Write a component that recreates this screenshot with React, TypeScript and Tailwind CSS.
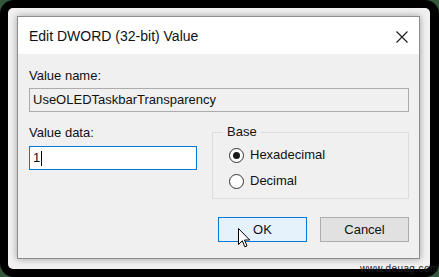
import React from 'react'

const font = { fontFamily: '"Liberation Sans", Arial, sans-serif' }

function CloseIcon() {
  return (
    <svg width="12" height="12" viewBox="0 0 12 12" fill="none" stroke="#1a1a1a" strokeWidth="1.1">
      <path d="M0.5 0.5 L11.5 11.5 M11.5 0.5 L0.5 11.5" />
    </svg>
  )
}

function Radio({ checked, label }: { checked?: boolean; label: string }) {
  return (
    <div className="flex items-center h-[26px]">
      <span className="w-[15px] h-[15px] rounded-full border border-[#333333] bg-white flex items-center justify-center">
        {checked && <span className="w-[7px] h-[7px] rounded-full bg-[#1a1a1a]" />}
      </span>
      <span className="ml-[6px] text-[13px] leading-4 text-[#111111]">{label}</span>
    </div>
  )
}

function Cursor() {
  return (
    <svg width="13" height="21" viewBox="0 0 13 21" className="absolute left-[238px] top-[228px]">
      <path
        d="M0.5 0.5 L0.5 16.5 L4.3 12.8 L6.8 18.8 L9 17.9 L6.5 12 L11.7 12 Z"
        fill="white"
        stroke="black"
        strokeWidth="1"
        strokeLinejoin="miter"
      />
    </svg>
  )
}

export default function App() {
  return (
    <div className="w-[439px] h-[277px] bg-[#34573c] relative overflow-hidden" style={font}>
      <div className="w-full h-full bg-black rounded-[14px] p-[8px] pr-[9px]">
        <div className="w-full h-full bg-[#f1f1f1] rounded-[5px] pl-[9px] pt-[8px]">
          <div className="w-[403px] h-[243px] border border-[#8c8c8c] bg-[#f0f0f0] shadow-[0_0_7px_rgba(0,0,0,0.35)] flex flex-col">
            {/* title bar */}
            <div className="h-[37px] bg-white flex items-center justify-between pl-[11px] pr-[11px] pt-[2px]">
              <span className="text-[14px] text-[#111111]">Edit DWORD (32-bit) Value</span>
              <CloseIcon />
            </div>

            {/* body */}
            <div className="flex flex-col pl-[11px] pr-[10px] pt-[14px]">
              <div className="text-[13px] leading-4 text-[#111111]">Value name:</div>
              <div className="mt-[4px] h-[24px] w-[380px] border border-[#acacac] bg-[#f0f0f0] flex items-center pl-[3px] text-[13px] text-[#111111]">
                UseOLEDTaskbarTransparency
              </div>

              <div className="flex mt-[12px]">
                <div className="flex flex-col w-[168px]">
                  <div className="mt-[1px] text-[13px] leading-4 text-[#111111]">Value data:</div>
                  <div className="mt-[5px] h-[24px] border border-[#0078d7] bg-white flex items-center pl-[3px] text-[13px] text-[#111111]">
                    1<span className="ml-[1px] w-[1px] h-[15px] bg-black" />
                  </div>
                </div>

                <fieldset className="ml-[15px] w-[197px] h-[75px] border border-[#dcdcdc] pl-[16px] pt-[2px]">
                  <legend className="ml-[-6px] px-[4px] text-[13px] leading-4 text-[#111111]">Base</legend>
                  <Radio checked label="Hexadecimal" />
                  <Radio label="Decimal" />
                </fieldset>
              </div>

              <div className="flex justify-end gap-[13px] mt-[18px]">
                <button className="w-[89px] h-[25px] border border-[#0078d7] bg-[#e5f1fb] text-[13px] text-[#111111]">OK</button>
                <button className="w-[89px] h-[25px] border border-[#adadad] bg-[#e1e1e1] text-[13px] text-[#111111]">Cancel</button>
              </div>
            </div>
          </div>
        </div>
      </div>

      <Cursor />
      <span className="absolute left-[360px] top-[263px] text-[10px] leading-3 tracking-[0.4px] text-[#1f1f1f]">www.deuag.com</span>
    </div>
  )
}
